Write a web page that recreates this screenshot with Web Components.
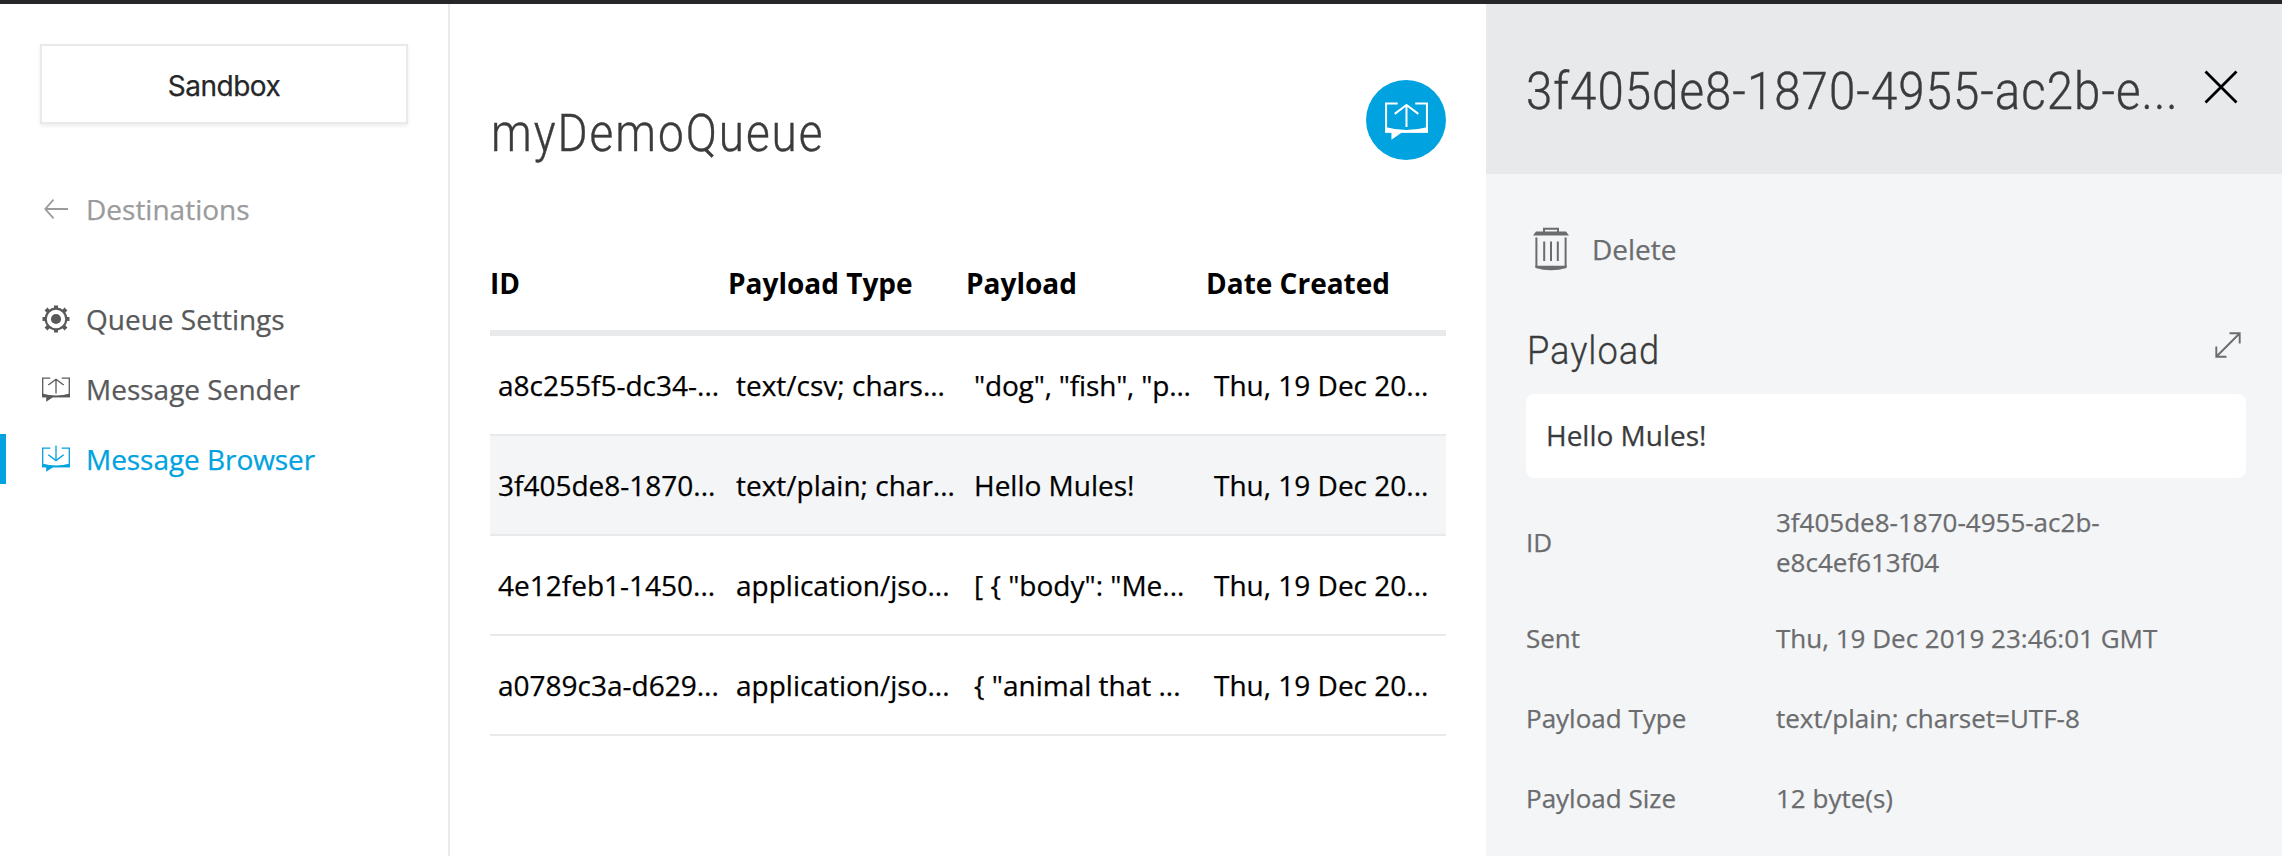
<!DOCTYPE html>
<html lang="en">
<head>
<meta charset="utf-8">
<title>myDemoQueue</title>
<style>
html,body{margin:0;height:100%;overflow:hidden;background:#fff}
body{font-family:"Open Sans","Noto Sans",sans-serif;font-size:28px;color:#000;-webkit-text-stroke:.25px}
</style>
</head>
<body>
<mq-app></mq-app>
<script>
const define = (name, html) => {
  const t = document.createElement('template');
  t.innerHTML = html;
  customElements.define(name, class extends HTMLElement {
    constructor() {
      super();
      this.attachShadow({mode: 'open'}).append(t.content.cloneNode(true));
    }
  });
};

const bubble = arrow => `<svg viewBox="0 0 28 26" width="100%" height="100%" fill="none" stroke="currentColor" stroke-width="1.3">
  <path d="M8.3 2.2H.7V20.6H27.3V2.2H19.7"/><path d="${arrow}"/>
  <path fill="currentColor" stroke="none" d="M0 17.6Q14 21.4 28 17.6V21.2H11L4.2 25.8V21.2H0Z"/></svg>`;
const ICONS = {
  back: `<svg viewBox="0 0 28 28" width="28" height="28" fill="none" stroke="currentColor" stroke-width="1.8"><path d="M26 14H3.5M11.5 4.6L3.3 14L11.5 23.4"/></svg>`,
  gear: `<svg viewBox="0 0 28 28" width="28" height="28"><circle cx="14" cy="14" r="10.3" fill="none" stroke="currentColor" stroke-width="2.2"/><circle cx="14" cy="14" r="5.1" fill="currentColor"/><path stroke="currentColor" stroke-width="4" d="M14 .5V4M14 24V27.5M.5 14H4M24 14H27.5M4 4L6.6 6.6M21.4 21.4L24 24M24 4L21.4 6.6M6.6 21.4L4 24"/></svg>`,
  send: bubble('M14 17.5V3M6.3 9L14 3.2L21.7 9'),
  browse: bubble('M14 -.5V14.6M6.3 8.8L14 14.6L21.7 8.8'),
  close: `<svg viewBox="0 0 34 34" width="34" height="34" fill="none" stroke="currentColor" stroke-width="2.8"><path d="M1.5 1.5L32.5 32.5M32.5 1.5L1.5 32.5"/></svg>`,
  expand: `<svg viewBox="0 0 26 26" width="26" height="26" fill="none" stroke="currentColor" stroke-width="1.9"><path d="M1.5 24.5L24.5 1.5M14.5 1.3H24.7V11.5M1.3 14.5V24.7H11.5"/></svg>`,
  trash: `<svg viewBox="0 0 36 44" width="36" height="44" fill="none" stroke="currentColor" stroke-width="2"><path d="M11 5V1.8H25V5"/><path fill="currentColor" stroke="none" d="M3 4.4H33L36 8.6H0Z"/><path d="M3.4 10.5V40M32.6 10.5V40M11.2 14.5V34M18 14.5V34M24.8 14.5V34"/><path fill="currentColor" stroke="none" d="M2.4 38.8H33.6V41Q18 45.4 2.4 41Z"/></svg>`
};
customElements.define('mq-icon', class extends HTMLElement {
  constructor() { super(); this.attachShadow({mode: 'open'}); }
  connectedCallback() {
    this.shadowRoot.innerHTML = `<style>:host{display:block;flex:none}svg{display:block;overflow:visible}</style>${ICONS[this.getAttribute('name')]}`;
  }
});

define('mq-nav-item', `<style>
  :host{display:flex;align-items:center;box-sizing:border-box;height:50px;padding-left:36px;border-left:6px solid transparent;color:#58595b;line-height:38px;white-space:nowrap}
  :host([muted]){color:#9a9b9c}
  :host([active]){color:#00a2df;border-left-color:#00a2df}
  .i{width:28px;margin-right:16px}
</style><div class="i"><slot name="icon"></slot></div><slot></slot>`);

define('mq-sidebar', `<style>
  :host{display:block;box-sizing:border-box;width:450px;border-right:2px solid #e8e9ea;padding-top:40px}
  .env{margin:0 40px;height:80px;box-sizing:border-box;border:2px solid #e8e9ea;box-shadow:0 2px 4px rgba(0,0,0,.08);display:flex;align-items:center;justify-content:center;font-family:Inter,sans-serif;font-size:28px;color:#262728;padding-top:4px}
  .env span{letter-spacing:-.5px}
  nav{display:flex;flex-direction:column;gap:20px;margin-top:60px}
  mq-nav-item[muted]{margin-bottom:40px}
  mq-nav-item[active]{letter-spacing:-.05px}
  [name=send],[name=browse]{width:28px;height:26px}
</style>
<div class="env"><span>Sandbox</span></div>
<nav>
  <mq-nav-item muted><mq-icon slot="icon" name="back"></mq-icon>Destinations</mq-nav-item>
  <mq-nav-item><mq-icon slot="icon" name="gear"></mq-icon>Queue Settings</mq-nav-item>
  <mq-nav-item><mq-icon slot="icon" name="send"></mq-icon>Message Sender</mq-nav-item>
  <mq-nav-item active><mq-icon slot="icon" name="browse"></mq-icon>Message Browser</mq-nav-item>
</nav>`);

define('mq-row', `<style>
  :host{display:grid;grid-template-columns:238px 238px 240px 240px;align-items:center;box-sizing:border-box;height:100px;border-bottom:2px solid #e8e9ea}
  :host([head]){height:106px;border-bottom-width:6px;font-weight:700;padding-top:6px;-webkit-text-stroke:0}
  :host([selected]){background:#f4f5f7}
  ::slotted(span){padding:0 0 0 8px;white-space:nowrap;line-height:38px}
  :host([head]) ::slotted(span){padding:0}
</style><slot></slot>`);

define('mq-browser', `<style>
  :host{display:block;flex:1;min-width:0;padding:76px 40px 0}
  header{display:flex;justify-content:space-between;height:150px}
  h1{margin:19px 0 0 1px;font:300 51px/70px Roboto,sans-serif;color:#3a3b3c;height:70px;letter-spacing:2.2px;transform:scaleX(.9);transform-origin:0 0;-webkit-text-stroke:.4px}
  button{width:80px;height:80px;border:0;border-radius:50%;background:#00a2df;color:#fff;padding:0;display:flex;align-items:center;justify-content:center}
  button mq-icon{width:43px;height:40px}
  .tight{letter-spacing:-.17px}
</style>
<header><h1>myDemoQueue</h1><button aria-label="Send message"><mq-icon name="send"></mq-icon></button></header>
<mq-row head><span>ID</span><span>Payload Type</span><span>Payload</span><span>Date Created</span></mq-row>
<mq-row><span>a8c255f5-dc34-...</span><span>text/csv; chars...</span><span class="tight">"dog", "fish", "p...</span><span>Thu, 19 Dec 20...</span></mq-row>
<mq-row selected><span>3f405de8-1870...</span><span>text/plain; char...</span><span>Hello Mules!</span><span>Thu, 19 Dec 20...</span></mq-row>
<mq-row><span>4e12feb1-1450...</span><span>application/jso...</span><span>[ { "body": "Me...</span><span>Thu, 19 Dec 20...</span></mq-row>
<mq-row><span>a0789c3a-d629...</span><span>application/jso...</span><span>{ "animal that ...</span><span>Thu, 19 Dec 20...</span></mq-row>`);

define('mq-field', `<style>
  :host{display:grid;grid-template-columns:250px auto;align-items:center;min-height:80px;font-size:26px;line-height:40px}
</style><slot name="label"></slot><div><slot></slot></div>`);

define('mq-detail', `<style>
  :host{display:block;width:796px;background:#f4f5f7;color:#6b6c6e}
  header{box-sizing:border-box;height:170px;background:#e8e9eb;padding:0 44px 0 40px;display:flex;align-items:center;justify-content:space-between;color:#000}
  header mq-icon{margin-bottom:4px}
  h2{margin:5px 0 0;width:660px;font:300 51px/70px Roboto,sans-serif;color:#3a3b3c;white-space:nowrap;letter-spacing:1.1px;transform:scaleX(.93);transform-origin:0 0;-webkit-text-stroke:.4px}
  main{padding:0 36px 0 40px}
  .del{display:flex;align-items:center;gap:23px;padding:53px 0 0 7px;height:44px}
  .sub{display:flex;align-items:flex-start;justify-content:space-between;margin-top:53px;height:56px;padding-right:5px}
  .sub mq-icon{margin-top:8px}
  h3{margin:-1px 0 0 1px;font:300 39px/56px Roboto,sans-serif;color:#3a3b3c;letter-spacing:1px;transform:scaleX(.93);transform-origin:0 0;-webkit-text-stroke:.3px}
  .box{margin-top:14px;height:84px;box-sizing:border-box;background:#fff;border-radius:8px;padding:0 20px 2px;display:flex;align-items:center;color:#3a3b3c}
  .fields{padding-top:24px}
  mq-field:first-child{margin-bottom:16px}
</style>
<header><h2>3f405de8-1870-4955-ac2b-e...</h2><mq-icon name="close"></mq-icon></header>
<main>
  <div class="del"><mq-icon name="trash"></mq-icon><span>Delete</span></div>
  <div class="sub"><h3>Payload</h3><mq-icon name="expand"></mq-icon></div>
  <div class="box">Hello Mules!</div>
  <div class="fields">
    <mq-field><span slot="label">ID</span>3f405de8-1870-4955-ac2b-<br>e8c4ef613f04</mq-field>
    <mq-field><span slot="label">Sent</span>Thu, 19 Dec 2019 23:46:01 GMT</mq-field>
    <mq-field><span slot="label">Payload Type</span>text/plain; charset=UTF-8</mq-field>
    <mq-field><span slot="label">Payload Size</span>12 byte(s)</mq-field>
  </div>
</main>`);

define('mq-app', `<style>
  :host{display:flex;box-sizing:border-box;height:856px;border-top:4px solid #262629}
</style><mq-sidebar></mq-sidebar><mq-browser></mq-browser><mq-detail></mq-detail>`);
</script>
</body>
</html>
